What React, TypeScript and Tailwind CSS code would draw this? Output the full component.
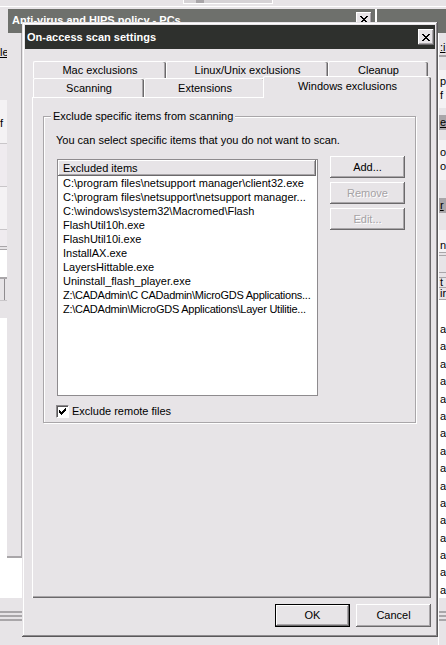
const raised =
  'shadow-[inset_-1px_-1px_#6b696b,inset_1px_1px_#ffffff,inset_-2px_-2px_#a9a6a9]';

const excluded = [
  { path: 'C:\\program files\\netsupport manager\\client32.exe', tight: false },
  { path: 'C:\\program files\\netsupport\\netsupport manager...', tight: false },
  { path: 'C:\\windows\\system32\\Macromed\\Flash', tight: false },
  { path: 'FlashUtil10h.exe', tight: false },
  { path: 'FlashUtil10i.exe', tight: false },
  { path: 'InstallAX.exe', tight: false },
  { path: 'LayersHittable.exe', tight: false },
  { path: 'Uninstall_flash_player.exe', tight: false },
  { path: 'Z:\\CADAdmin\\C CADadmin\\MicroGDS Applications...', tight: true },
  { path: 'Z:\\CADAdmin\\MicroGDS Applications\\Layer Utilitie...', tight: true },
];

export default function App() {
  return (
    <div className="relative h-[645px] w-[446px] overflow-hidden bg-[#e7e4e7] font-['Liberation_Sans',Arial,sans-serif] text-[11px] leading-none text-black select-none">
      <Backdrop />
      <ScanSettingsDialog />
    </div>
  );
}

// ============ pixel glyphs ============

function CloseGlyph() {
  return (
    <svg width="8" height="7" viewBox="0 0 8 7" shapeRendering="crispEdges">
      <path
        fill="#000"
        d="M0 0h2v1H0zM6 0h2v1H6zM1 1h2v1H1zM5 1h2v1H5zM2 2h4v1H2zM3 3h2v1H3zM2 4h4v1H2zM1 5h2v1H1zM5 5h2v1H5zM0 6h2v1H0zM6 6h2v1H6z"
      />
    </svg>
  );
}

function CheckGlyph() {
  return (
    <svg width="7" height="7" viewBox="0 0 7 7" shapeRendering="crispEdges">
      <path
        fill="#000"
        d="M6 0h1v1H6zM5 1h2v1H5zM0 2h1v1H0zM4 2h3v1H4zM0 3h2v1H0zM3 3h3v1H3zM0 4h5v1H0zM1 5h3v1H1zM2 6h1v1H2z"
      />
    </svg>
  );
}

// ============ background windows ============

function Backdrop() {
  return (
    <div className="flex h-full flex-col">
      <div className="h-[9px] shrink-0">
        <div className="h-[7px] border-b border-white pl-[183px]">
          <div className="flex h-[4px] w-[90px] border-x border-b border-white bg-[#d6d3d6] pl-[12px]">
            <div className="h-[3px] w-[8px] bg-[#a9a6a9]" />
          </div>
        </div>
      </div>

      <div className="flex h-[24px] shrink-0">
        <div className="w-[8px]" />
        <div className="flex w-[367px] items-start justify-between bg-[#6e706c] pl-[4px] pr-[3px] pt-[6px]">
          <span className="text-[11px] font-bold text-white">Anti-virus and HIPS policy - PCs</span>
          <div className={`-mt-[3px] flex h-[14px] w-[16px] items-center justify-center bg-[#e7e4e7] ${raised}`}>
            <CloseGlyph />
          </div>
        </div>
        <div className="w-[2px] bg-white" />
        <div className="flex-1 bg-[#6e706c]" />
      </div>

      <div className="flex flex-1">
        <LeftEdge />
        <div className="w-[416px]" />
        <RightEdge />
      </div>
    </div>
  );
}

function LeftEdge() {
  return (
    <div className="flex w-[22px] flex-col">
      <div className="flex h-[525px]">
        <div className="flex w-[7px] flex-col overflow-hidden">
          <div className="h-[12px]" />
          <div className="h-[14px] whitespace-nowrap leading-[14px] underline">le</div>
          <div className="h-[41px]" />
          <div className="h-[43px] bg-[#f4f2f4] pt-[17px] leading-[12px]">f</div>
          <div className="h-[43px] border-t border-[#c9c6c9] bg-[#efebef]" />
          <div className="h-[43px] border-t border-[#c9c6c9] bg-[#f4f2f4]" />
          <div className="h-[17px] border-t border-[#c9c6c9] bg-[#efebef]" />
          <div className="h-[4px] border-y border-[#a9a6a9]" />
          <div className="h-[27px] bg-white" />
          <div className="h-[23px] border-t-2 border-[#a9a6a9] pl-[4px]">
            <div className="h-full border-l border-[#8f8c8f]" />
          </div>
          <div className="h-[18px] border-t border-[#c9c6c9]" />
          <div className="flex-1 border-r border-white bg-white" />
        </div>
        <div className="flex flex-1 flex-col">
          <div className="flex-1 border-r border-[#a9a6a9]" />
          <div className="h-[2px] bg-[#a9a6a9]" />
        </div>
      </div>
      <div className="h-[40px] bg-white" />
      <div className="flex flex-1 flex-col pt-[13px]">
        <div className="h-[2px] bg-[#a9a6a9]" />
        <div className="h-[2px]" />
        <div className="h-[2px] bg-[#a9a6a9]" />
        <div className="h-[2px]" />
        <div className="h-[2px] bg-[#a9a6a9]" />
      </div>
    </div>
  );
}

function RightEdge() {
  const rows = Array.from({ length: 16 });
  return (
    <div className="flex flex-1 flex-col overflow-hidden border-l border-white">
      <div className="h-[7px]" />
      <div className="h-[15px] whitespace-nowrap pl-[1px] leading-[15px] underline">:i</div>
      <div className="h-[2px] bg-[#a9a6a9]" />
      <div className="h-[13px]" />
      <div className="h-[38px] bg-[#f4f2f4] pl-[1px] pt-[4px] leading-[14px]">
        <div>p</div>
        <div>f</div>
      </div>
      <div className="h-[7px]" />
      <div className="h-[15px] bg-[#a9a6a9] pl-[1px] leading-[15px] underline">e</div>
      <div className="h-[10px]" />
      <div className="h-[40px] whitespace-nowrap bg-[#f4f2f4] pl-[1px] pt-[5px] leading-[14px]">
        <div>of</div>
        <div>ou</div>
      </div>
      <div className="h-[18px]" />
      <div className="h-[15px] bg-[#a9a6a9] pl-[1px] leading-[15px] underline">r</div>
      <div className="h-[17px]" />
      <div className="h-[22px] bg-[#f4f2f4] pl-[1px] pt-[8px] leading-[14px]">n</div>
      <div className="h-[4px] border-y border-[#a9a6a9]" />
      <div className="h-[16px]" />
      <div className="h-[6px] border-y border-[#a9a6a9]" />
      <div className="h-[9px] pl-[1px] leading-[9px]">t</div>
      <div className="h-[13px] whitespace-nowrap border-y border-[#a9a6a9] pl-[1px] leading-[11px]">ir</div>
      <div className="h-[298px] bg-white pl-[1px] pt-[22px]">
        {rows.map((_, i) => (
          <div key={i} className="h-[17.4px] leading-[14px]">
            a
          </div>
        ))}
      </div>
      <div className="flex flex-1 flex-col pt-[13px]">
        <div className="h-[2px] bg-[#a9a6a9]" />
        <div className="h-[2px]" />
        <div className="h-[2px] bg-[#a9a6a9]" />
        <div className="h-[2px]" />
        <div className="h-[2px] bg-[#a9a6a9]" />
      </div>
    </div>
  );
}

// ============ dialog ============

function ScanSettingsDialog() {
  return (
    <div className="absolute left-[22px] top-[22px] flex h-[615px] w-[416px] flex-col bg-[#e7e4e7] p-[3px] shadow-[inset_-1px_-1px_#5a585a,inset_1px_1px_#e7e4e7,inset_-2px_-2px_#8f8c8f,inset_2px_2px_#ffffff]">
      <div className="flex h-[24px] shrink-0 items-center justify-between bg-[#2e302d] pl-[2px] pr-[1px]">
        <span className="text-[11px] font-bold text-white">On-access scan settings</span>
        <div className={`flex h-[16px] w-[16px] items-center justify-center bg-[#e7e4e7] ${raised}`}>
          <CloseGlyph />
        </div>
      </div>

      <div className="flex flex-1 flex-col pl-[7px] pt-[12px]">
        <TabStrip />
        <div className="h-[501px] w-[399px] border-l border-t border-white pl-[10px] pt-[18px] shadow-[inset_-1px_-1px_#6b696b,inset_-2px_-2px_#a9a6a9]">
          <ExclusionsGroup />
        </div>
        <div className="mt-[6px] flex w-[399px] justify-end gap-[6px]">
          <button className={`flex h-[23px] w-[75px] items-center justify-center border border-black bg-[#e7e4e7] ${raised}`}>
            OK
          </button>
          <button className={`flex h-[23px] w-[75px] items-center justify-center bg-[#e7e4e7] ${raised}`}>
            Cancel
          </button>
        </div>
      </div>
    </div>
  );
}

function Tab({ label, width, height }: { label: string; width: string; height: string }) {
  return (
    <div
      className={`flex items-center justify-center rounded-t-[2px] border-l border-t border-white shadow-[inset_-1px_0_#6b696b,inset_-2px_0_#a9a6a9] ${width} ${height}`}
    >
      {label}
    </div>
  );
}

function TabStrip() {
  return (
    <div className="flex w-[399px] flex-col">
      <div className="flex h-[17px] pl-[1px]">
        <Tab label="Mac exclusions" width="w-[133px]" height="h-[17px]" />
        <Tab label="Linux/Unix exclusions" width="w-[162px]" height="h-[17px]" />
        <Tab label="Cleanup" width="w-[100px]" height="h-[17px]" />
      </div>
      <div className="flex h-[19px] pl-[1px]">
        <Tab label="Scanning" width="w-[111px]" height="h-[19px]" />
        <Tab label="Extensions" width="w-[121px]" height="h-[19px]" />
        <div className="relative z-10 -ml-[2px] -mt-[2px] flex h-[22px] w-[168px] items-center justify-center rounded-t-[2px] border-l border-t border-white bg-[#e7e4e7] pb-[2px] shadow-[inset_-1px_0_#6b696b,inset_-2px_0_#a9a6a9]">
          Windows exclusions
        </div>
      </div>
    </div>
  );
}

function ExclusionsGroup() {
  return (
    <div className="relative h-[307px] w-[373px] border border-[#a9a6a9] pl-[12px] pt-[17px] shadow-[inset_1px_1px_#ffffff,1px_1px_#ffffff]">
      <span className="absolute left-[7px] top-[-7px] bg-[#e7e4e7] px-[2px] leading-[13px]">
        Exclude specific items from scanning
      </span>
      <div className="h-[13px] leading-[13px]">
        You can select specific items that you do not want to scan.
      </div>

      <div className="mt-[9px] flex items-start">
        <div className="mt-[3px] ml-[1px] h-[237px] w-[261px] overflow-hidden border border-[#8e8b8e] bg-white">
          <div className={`flex h-[16px] w-[258px] items-center bg-[#e7e4e7] pl-[5px] ${raised}`}>
            Excluded items
          </div>
          {excluded.map((item) => (
            <div
              key={item.path}
              className={`h-[14px] whitespace-nowrap pl-[5px] leading-[14px] ${item.tight ? 'tracking-[-0.25px]' : ''}`}
            >
              {item.path}
            </div>
          ))}
        </div>
        <div className="ml-[12px] flex flex-col gap-[4px]">
          <button className={`flex h-[22px] w-[75px] items-center justify-center bg-[#e7e4e7] ${raised}`}>
            Add...
          </button>
          <button className={`flex h-[22px] w-[75px] items-center justify-center bg-[#e7e4e7] text-[#a5a2a5] [text-shadow:1px_1px_0_#ffffff] ${raised}`}>
            Remove
          </button>
          <button className={`flex h-[22px] w-[75px] items-center justify-center bg-[#e7e4e7] text-[#a5a2a5] [text-shadow:1px_1px_0_#ffffff] ${raised}`}>
            Edit...
          </button>
        </div>
      </div>

      <label className="mt-[9px] flex items-center gap-[3px]">
        <span className="flex h-[13px] w-[13px] items-center justify-center border border-b-white border-l-[#8e8b8e] border-r-white border-t-[#8e8b8e] bg-white shadow-[inset_1px_1px_#5a585a]">
          <CheckGlyph />
        </span>
        <span className="leading-[13px]">Exclude remote files</span>
      </label>
    </div>
  );
}
